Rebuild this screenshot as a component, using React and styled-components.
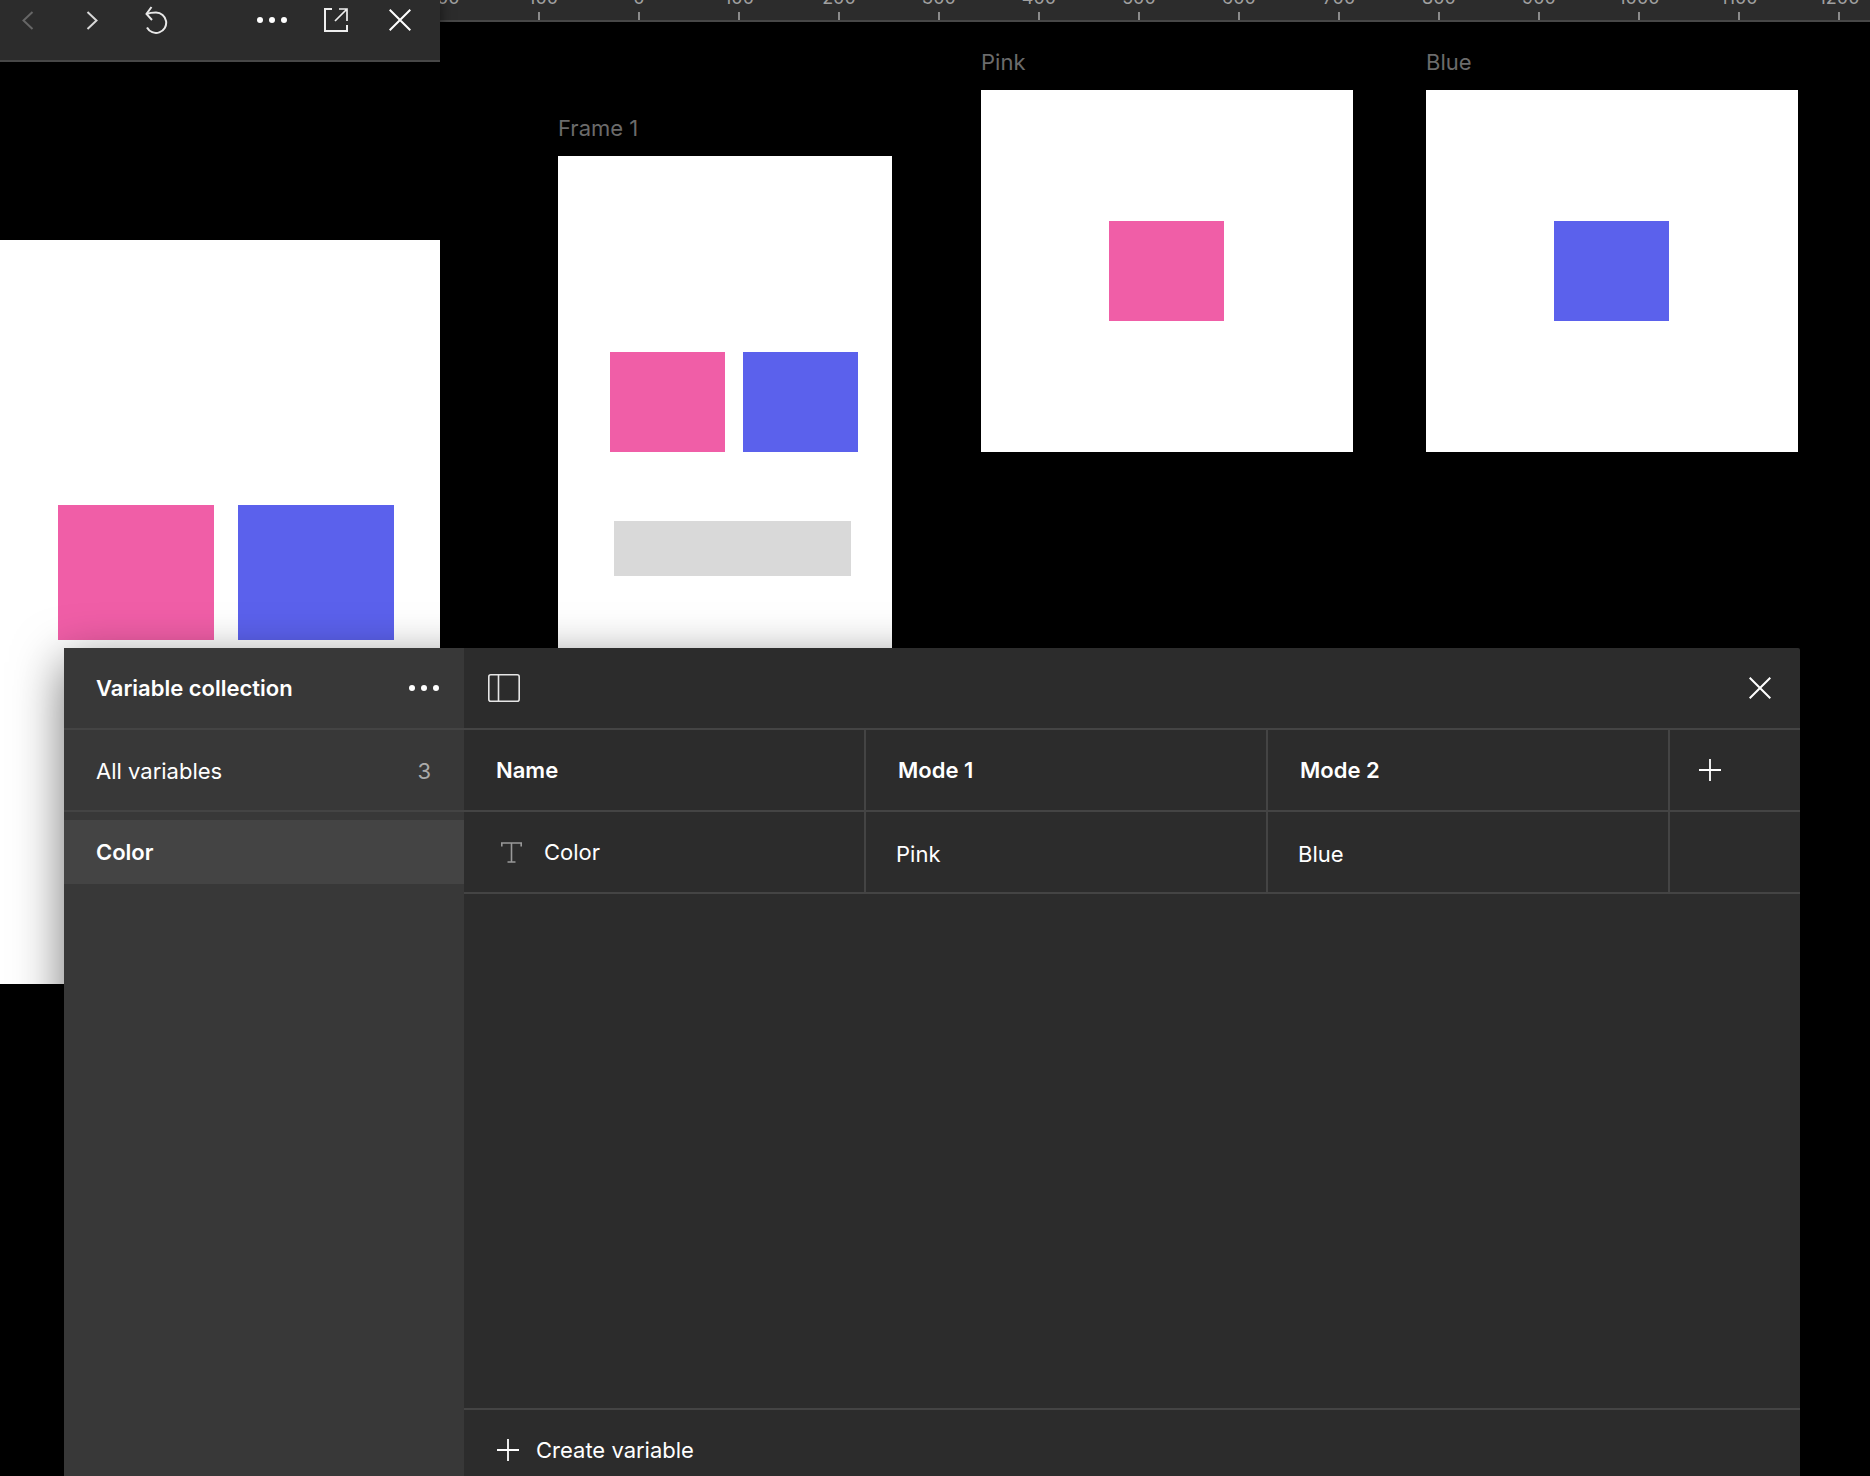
import styled, { createGlobalStyle } from "styled-components";

const GlobalStyle = createGlobalStyle`
  html, body {
    margin: 0;
    background: #000;
    font-family: "Inter", "Liberation Sans", sans-serif;
    color: #fff;
  }
`;

const Stage = styled.div`
  position: relative;
  width: 1870px;
  height: 1476px;
  overflow: hidden;
  display: grid;
  grid-template-columns: 440px 1fr;
  background: #000;
`;

// left preview window
const PreviewPane = styled.div`
  position: relative;
  z-index: 1;
  display: flex;
  flex-direction: column;
`;

const Toolbar = styled.div`
  height: 60px;
  box-sizing: content-box;
  border-bottom: 2px solid #474747;
  background: #2c2c2c;
  box-shadow: 0 0 12px rgba(0, 0, 0, 0.55);
  display: flex;
  justify-content: space-between;
  padding: 0 12px 0 0;
`;

const ToolGroup = styled.div`
  display: flex;
  gap: 8px;
  height: 40px;
`;

const ToolCell = styled.div`
  width: 56px;
  display: flex;
  align-items: center;
  justify-content: center;
  color: ${(p) => p.$color || "#fff"};
`;

const PreviewFrame = styled.div`
  margin-top: 178px;
  height: 744px;
  background: #fff;
  box-sizing: border-box;
  padding: 265px 0 0 58px;
  display: flex;
  gap: 24px;
  align-items: flex-start;
`;

const Swatch = styled.div`
  width: ${(p) => p.$w}px;
  height: ${(p) => p.$h}px;
  background: ${(p) => p.$color};
  flex-shrink: 0;
`;

// canvas
const CanvasColumn = styled.div`
  display: flex;
  flex-direction: column;
  min-width: 0;
`;

const Ruler = styled.div`
  height: 20px;
  box-sizing: content-box;
  border-bottom: 2px solid #474747;
  background: #2c2c2c;
  overflow: hidden;
  display: flex;
  padding-left: 0;
  margin-left: -51px;
`;

const RulerMark = styled.div`
  width: 100px;
  flex-shrink: 0;
  display: flex;
  flex-direction: column;
  align-items: center;
  justify-content: flex-end;
  color: #a0a0a0;
  font-size: 18px;
  line-height: 18px;

  span {
    margin-bottom: 5px;
  }

  &::after {
    content: "";
    display: block;
    width: 2px;
    height: 8px;
    background: #8a8a8a;
    flex-shrink: 0;
  }
`;

const Canvas = styled.div`
  display: flex;
  align-items: flex-start;
  padding-left: 118px;
`;

const ArtGroup = styled.div`
  margin-top: ${(p) => p.$top}px;
  margin-left: ${(p) => p.$left || 0}px;
`;

const ArtLabel = styled.div`
  height: 36px;
  line-height: 36px;
  margin-bottom: 10px;
  font-size: 22px;
  color: #6b6b6b;
`;

const Artboard = styled.div`
  width: ${(p) => p.$w}px;
  height: ${(p) => p.$h}px;
  box-sizing: border-box;
  padding-right: 1px;
  background: #fff;
  display: flex;
  align-items: center;
  justify-content: center;
`;

const Frame1Board = styled.div`
  width: 334px;
  height: 560px;
  background: #fff;
  box-sizing: border-box;
  padding: 196px 0 0 52px;
`;

const SwatchRow = styled.div`
  display: flex;
  gap: 18px;
`;

const GreyBar = styled.div`
  width: 237px;
  height: 55px;
  margin: 69px 0 0 4px;
  background: #d9d9d9;
`;

// variables modal
const Modal = styled.div`
  position: absolute;
  z-index: 2;
  top: 648px;
  left: 64px;
  right: 70px;
  bottom: 0;
  display: flex;
  border-radius: 2px 2px 0 0;
  background: #2c2c2c;
  box-shadow: 0 14px 50px rgba(0, 0, 0, 0.55);
`;

const Sidebar = styled.div`
  width: 400px;
  flex-shrink: 0;
  background: #383838;
  display: flex;
  flex-direction: column;
`;

const SideHeader = styled.div`
  height: 80px;
  box-sizing: content-box;
  border-bottom: 2px solid #444;
  display: flex;
  align-items: center;
  justify-content: space-between;
  padding: 0 24px 0 32px;
  font-size: 22px;
  font-weight: 600;
`;

const SideRow = styled.div`
  height: 82px;
  box-sizing: border-box;
  border-bottom: 2px solid #444;
  display: flex;
  align-items: center;
  justify-content: space-between;
  padding: 2px 33px 0 32px;
  margin-bottom: 8px;
  font-size: 22px;
`;

const Count = styled.span`
  color: #aaa;
`;

const SideRowActive = styled.div`
  height: 64px;
  background: #444;
  display: flex;
  align-items: center;
  padding: 0 32px;
  font-size: 22px;
  font-weight: 600;
`;

const Main = styled.div`
  flex: 1;
  min-width: 0;
  display: flex;
  flex-direction: column;
`;

const MainHeader = styled.div`
  height: 80px;
  flex-shrink: 0;
  box-sizing: content-box;
  border-bottom: 2px solid #444;
  display: flex;
  align-items: center;
  justify-content: space-between;
  padding: 0 29px 0 24px;
`;

const TableRow = styled.div`
  display: grid;
  grid-template-columns: 402px 402px 402px 1fr;
  flex-shrink: 0;
  height: 80px;
  box-sizing: content-box;
  border-bottom: 2px solid #444;
`;

const Cell = styled.div`
  display: flex;
  align-items: center;
  box-sizing: border-box;
  border-right: ${(p) => (p.$last ? "none" : "2px solid #444")};
  padding-left: ${(p) => p.$pad ?? 32}px;
  padding-top: ${(p) => p.$drop || 0}px;
  gap: ${(p) => p.$gap || 0}px;
  font-size: 22px;
  font-weight: ${(p) => (p.$bold ? 600 : 400)};
`;

const TableFill = styled.div`
  flex: 1;
`;

const Footer = styled.div`
  height: 68px;
  flex-shrink: 0;
  box-sizing: border-box;
  border-top: 2px solid #444;
  display: flex;
  align-items: center;
  gap: 17px;
  padding: 14px 0 0 33px;
  font-size: 22px;
`;

// icons
const Chevron = ({ flip, color }) => (
  <svg width="12" height="19" viewBox="0 0 12 19" fill="none" stroke="currentColor" strokeWidth="2" style={{ color }}>
    <polyline points={flip ? "1.5,1 10.5,9.5 1.5,18" : "10.5,1 1.5,9.5 10.5,18"} />
  </svg>
);

const ResetIcon = () => (
  <svg width="24" height="28" viewBox="0 0 24 28" fill="none" stroke="#e8e8e8" strokeWidth="2">
    <path d="M7.5 1 L2.5 8 L8 14" />
    <path d="M2.5 8 C5 7 8 6.5 12 6.5 A10.2 10.2 0 1 1 3 21.5" />
  </svg>
);

const Dots = () => (
  <svg width="32" height="8" viewBox="0 0 32 8" fill="#fff">
    <circle cx="4" cy="4" r="3" />
    <circle cx="16" cy="4" r="3" />
    <circle cx="28" cy="4" r="3" />
  </svg>
);

const ExternalIcon = () => (
  <svg width="24" height="24" viewBox="0 0 24 24" fill="none" stroke="#eee" strokeWidth="2">
    <path d="M8 1 H1 V23 H23 V17" />
    <path d="M11 13 L23 1 M15 1 H23 V13" strokeWidth="1.7" />
  </svg>
);

const CloseIcon = () => (
  <svg width="22" height="22" viewBox="0 0 22 22" fill="none" stroke="#fff" strokeWidth="2">
    <path d="M0.7 0.7 L21.3 21.3 M21.3 0.7 L0.7 21.3" />
  </svg>
);

const PanelIcon = () => (
  <svg width="32" height="28" viewBox="0 0 32 28" fill="none" stroke="#e6e6e6" strokeWidth="1.6">
    <rect x="0.8" y="0.8" width="30.4" height="26.4" rx="2" />
    <path d="M10.5 1 V27" />
  </svg>
);

const PlusIcon = () => (
  <svg width="22" height="22" viewBox="0 0 22 22" fill="none" stroke="#fff" strokeWidth="1.8" style={{ flexShrink: 0 }}>
    <path d="M11 0 V22 M0 11 H22" />
  </svg>
);

const TypeIcon = () => (
  <svg width="21" height="21" viewBox="0 0 21 21" fill="none" stroke="#999" strokeWidth="1.6" style={{ flexShrink: 0 }}>
    <path d="M0.8 4.5 V1 H20.2 V4.5 M10.5 1 V20 M6.5 20 H14.5" />
  </svg>
);

const RULER = ["-200", "-100", "0", "100", "200", "300", "400", "500", "600", "700", "800", "900", "1000", "1100", "1200"];

const PINK = "#f05ea7";
const BLUE = "#5b61ec";

export default function App() {
  return (
    <Stage>
      <GlobalStyle />

      <PreviewPane>
        <Toolbar>
          <ToolGroup>
            <ToolCell>
              <Chevron color="#666" />
            </ToolCell>
            <ToolCell>
              <Chevron flip color="#d8d8d8" />
            </ToolCell>
            <ToolCell>
              <ResetIcon />
            </ToolCell>
          </ToolGroup>
          <ToolGroup>
            <ToolCell>
              <Dots />
            </ToolCell>
            <ToolCell>
              <ExternalIcon />
            </ToolCell>
            <ToolCell>
              <CloseIcon />
            </ToolCell>
          </ToolGroup>
        </Toolbar>
        <PreviewFrame>
          <Swatch $w={156} $h={135} $color={PINK} />
          <Swatch $w={156} $h={135} $color={BLUE} />
        </PreviewFrame>
      </PreviewPane>

      <CanvasColumn>
        <Ruler>
          {RULER.map((n) => (
            <RulerMark key={n}>
              <span>{n}</span>
            </RulerMark>
          ))}
        </Ruler>
        <Canvas>
          <ArtGroup $top={88}>
            <ArtLabel>Frame 1</ArtLabel>
            <Frame1Board>
              <SwatchRow>
                <Swatch $w={115} $h={100} $color={PINK} />
                <Swatch $w={115} $h={100} $color={BLUE} />
              </SwatchRow>
              <GreyBar />
            </Frame1Board>
          </ArtGroup>
          <ArtGroup $top={22} $left={89}>
            <ArtLabel>Pink</ArtLabel>
            <Artboard $w={372} $h={362}>
              <Swatch $w={115} $h={100} $color={PINK} />
            </Artboard>
          </ArtGroup>
          <ArtGroup $top={22} $left={73}>
            <ArtLabel>Blue</ArtLabel>
            <Artboard $w={372} $h={362}>
              <Swatch $w={115} $h={100} $color={BLUE} />
            </Artboard>
          </ArtGroup>
        </Canvas>
      </CanvasColumn>

      <Modal>
        <Sidebar>
          <SideHeader>
            <span>Variable collection</span>
            <Dots />
          </SideHeader>
          <SideRow>
            <span>All variables</span>
            <Count>3</Count>
          </SideRow>
          <SideRowActive>Color</SideRowActive>
        </Sidebar>
        <Main>
          <MainHeader>
            <PanelIcon />
            <CloseIcon />
          </MainHeader>
          <TableRow>
            <Cell $bold>Name</Cell>
            <Cell $bold>Mode 1</Cell>
            <Cell $bold>Mode 2</Cell>
            <Cell $last $pad={29}>
              <PlusIcon />
            </Cell>
          </TableRow>
          <TableRow>
            <Cell $pad={37} $gap={22}>
              <TypeIcon />
              Color
            </Cell>
            <Cell $pad={30} $drop={4}>
              Pink
            </Cell>
            <Cell $pad={30} $drop={4}>
              Blue
            </Cell>
            <Cell $last />
          </TableRow>
          <TableFill />
          <Footer>
            <PlusIcon />
            Create variable
          </Footer>
        </Main>
      </Modal>
    </Stage>
  );
}
